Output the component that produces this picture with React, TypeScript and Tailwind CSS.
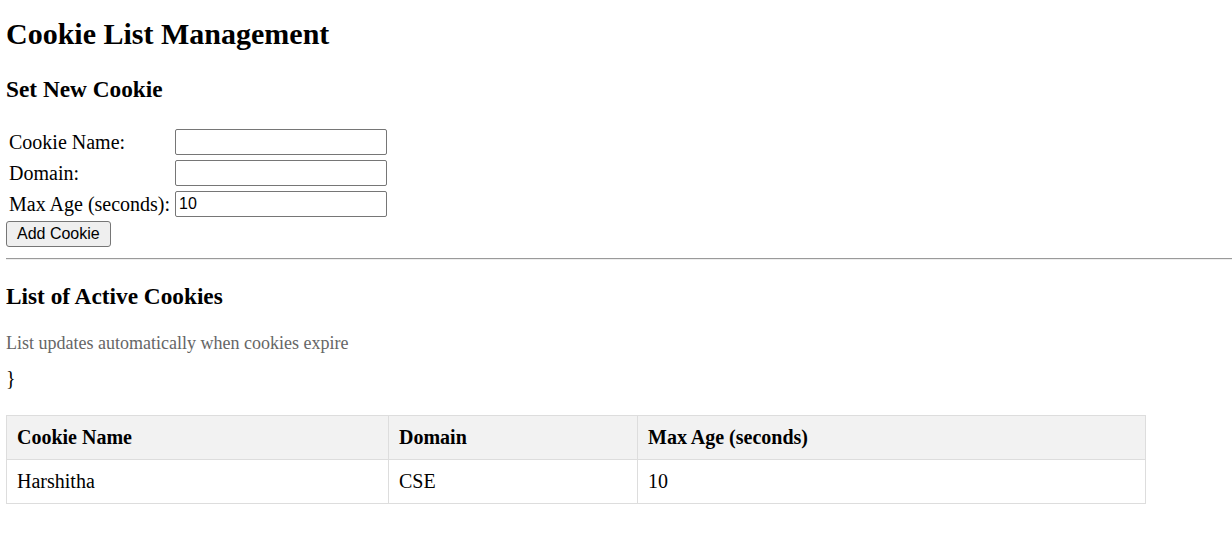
import React from "react";

const cellBase = "border-l border-t border-[#dddddd] px-[10px] py-[10px] leading-[23px]";

export default function App() {
  const rows = [{ name: "Harshitha", domain: "CSE", age: "10" }];
  return (
    <div className="min-h-[559px] bg-white pl-[6px] font-['Liberation_Serif',serif] text-black">
      <h1 className="mt-[16px] text-[30px] font-bold leading-[35px]">Cookie List Management</h1>
      <h2 className="mt-[25px] text-[23.3px] font-bold leading-[27px]">Set New Cookie</h2>

      <div className="mt-[26px] flex flex-col gap-[5px]">
        {[
          { label: "Cookie Name:", value: "" },
          { label: "Domain:", value: "" },
          { label: "Max Age (seconds):", value: "10" },
        ].map((f) => (
          <div key={f.label} className="flex h-[26px] items-center">
            <label className="w-[169px] pl-[3px] text-[20px] leading-[23px]">{f.label}</label>
            <input
              type="text"
              defaultValue={f.value}
              className="h-[26px] w-[212px] rounded-[2px] border border-[#767676] bg-white pl-[3px] font-['Liberation_Sans',Arial,sans-serif] text-[16px] text-black outline-none"
            />
          </div>
        ))}
      </div>

      <button className="mt-[4px] flex h-[26px] items-center rounded-[3px] border border-[#767676] bg-[#efefef] px-[10px] font-['Liberation_Sans',Arial,sans-serif] text-[16px] leading-[18px] text-black">
        Add Cookie
      </button>

      <hr className="mt-[11px] h-[2px] border-0 border-t border-b border-t-[#9a9a9a] border-b-[#eeeeee]" />

      <h2 className="mt-[23px] text-[23.3px] font-bold leading-[27px]">List of Active Cookies</h2>
      <p className="mt-[23px] text-[18px] leading-[21px] text-[#666666]">
        List updates automatically when cookies expire
      </p>
      <p className="mt-[13px] text-[20px] leading-[23px]">{"}"}</p>

      <div className="mt-[25px] grid w-[1140px] grid-cols-[382px_249px_508px] border-r border-b border-[#dddddd] text-[20px]">
        <div className={`${cellBase} bg-[#f2f2f2] font-bold`}>Cookie Name</div>
        <div className={`${cellBase} bg-[#f2f2f2] font-bold`}>Domain</div>
        <div className={`${cellBase} bg-[#f2f2f2] font-bold`}>Max Age (seconds)</div>
        {rows.map((r) => (
          <React.Fragment key={r.name}>
            <div className={cellBase}>{r.name}</div>
            <div className={cellBase}>{r.domain}</div>
            <div className={cellBase}>{r.age}</div>
          </React.Fragment>
        ))}
      </div>
    </div>
  );
}
